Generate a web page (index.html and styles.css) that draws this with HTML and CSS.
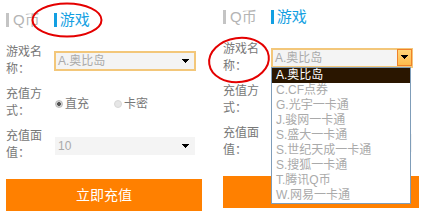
FILE: index.html
```html
<!DOCTYPE html>
<html>
<head>
<meta charset="utf-8">
<link rel="stylesheet" href="styles.css">
</head>
<body>
<div class="wrap">
  <div class="panel p1">
    <div class="tabs">
      <span class="tab off"><i class="bar"></i>Q币</span>
      <span class="tab on"><i class="bar"></i>游戏</span>
    </div>
    <div class="row">
      <div class="label">游戏名称：</div>
      <div class="select hl"><span class="val">A.奥比岛</span><svg class="arr" width="8" height="5" viewBox="0 0 8 5"><path d="M0 0h7v1h-1v1h-1v1h-1v1h-1v-1h-1v-1h-1v-1h-1z" fill="#000"/></svg></div>
    </div>
    <div class="row">
      <div class="label">充值方式：</div>
      <div class="radios">
        <span class="radio"><i class="dot on"></i>直充</span>
        <span class="radio"><i class="dot"></i>卡密</span>
      </div>
    </div>
    <div class="row">
      <div class="label">充值面值：</div>
      <div class="select plain"><span class="val">10</span><svg class="arr" width="8" height="5" viewBox="0 0 8 5"><path d="M0 0h7v1h-1v1h-1v1h-1v1h-1v-1h-1v-1h-1v-1h-1z" fill="#000"/></svg></div>
    </div>
    <button class="btn">立即充值</button>
  </div>

  <div class="panel p2">
    <div class="tabs">
      <span class="tab off"><i class="bar"></i>Q币</span>
      <span class="tab on"><i class="bar"></i>游戏</span>
    </div>
    <div class="row">
      <div class="label">游戏名称：</div>
      <div class="select hl open"><span class="val">A.奥比岛</span><span class="abtn"><svg width="8" height="5" viewBox="0 0 8 5"><path d="M0 0h7v1h-1v1h-1v1h-1v1h-1v-1h-1v-1h-1v-1h-1z" fill="#000"/></svg></span>
        <ul class="list">
          <li class="sel">A.奥比岛</li>
          <li>C.CF点券</li>
          <li>G.光宇一卡通</li>
          <li>J.骏网一卡通</li>
          <li>S.盛大一卡通</li>
          <li>S.世纪天成一卡通</li>
          <li>S.搜狐一卡通</li>
          <li>T.腾讯Q币</li>
          <li>W.网易一卡通</li>
        </ul>
      </div>
    </div>
    <div class="row">
      <div class="label">充值方式：</div>
      <div class="radios">
        <span class="radio"><i class="dot on"></i>直充</span>
        <span class="radio"><i class="dot"></i>卡密</span>
      </div>
    </div>
    <div class="row">
      <div class="label">充值面值：</div>
      <div class="select plain"><span class="val">10</span></div>
    </div>
    <button class="btn">立即充值</button>
  </div>
</div>
<svg class="marks" width="426" height="219" viewBox="0 0 426 219">
  <ellipse cx="67" cy="20" rx="34.5" ry="16.5" fill="none" stroke="#e40000" stroke-width="2"/>
  <ellipse cx="239" cy="60" rx="30" ry="22" fill="none" stroke="#e40000" stroke-width="2" transform="rotate(-8 239 60)"/>
  <rect x="273.5" y="171.5" width="82" height="16" fill="none" stroke="#e01010" stroke-width="2"/>
</svg>
</body>
</html>
```

FILE: styles.css
```css
* { box-sizing: border-box; }
html, body { margin: 0; padding: 0; background: #fff; }
body {
  width: 426px;
  height: 219px;
  overflow: hidden;
  position: relative;
  font-family: "Liberation Sans", "Noto Sans CJK SC", sans-serif;
  font-size: 12px;
  color: #777;
}
.wrap {
  display: flex;
  align-items: flex-start;
  padding-left: 6px;
  gap: 21px;
}
.panel { width: 196px; display: flex; flex-direction: column; }
.p1 { padding-top: 10px; }
.p2 { padding-top: 7px; }

.tabs {
  display: flex;
  align-items: center;
  height: 20px;
  margin-bottom: 14px;
  font-size: 15px;
  line-height: 20px;
}
.tab { display: flex; align-items: center; }
.tab .bar { display: block; width: 3px; height: 14px; margin-right: 4px; }
.tab.off { color: #b4b4b4; margin-right: 14px; }
.tab.off .bar { background: #c4c4c4; }
.tab.on { color: #139fe2; }
.tab.on .bar { background: #139fe2; margin-right: 3px; }

.row {
  display: flex;
  align-items: center;
  margin-bottom: 8px;
}
.label {
  width: 40px;
  margin-right: 8px;
  line-height: 17px;
  color: #777;
  font-size: 12px;
}
.select {
  position: relative;
  width: 142px;
  display: flex;
  align-items: center;
  background: #f4f4f4;
  color: #aaa;
}
.select .val { flex: 1; padding-left: 3px; line-height: 16px; }
.select.hl { height: 20px; border: 2px solid #f3c77a; }
.select.hl .val { padding-left: 2px; }
.select.plain { height: 18px; width: 140px; margin-left: 1px; margin-top: 2px; }
.select .arr { margin-right: 5px; }
.select.hl .arr { margin-right: 4px; }

.abtn {
  width: 15px;
  height: 17px;
  margin-right: -1px;
  margin-top: -1px;
  background: linear-gradient(#ffd57a, #ffbc4c);
  border: 1px solid #f0822a;
  display: flex;
  align-items: center;
  justify-content: center;
}

.list {
  position: absolute;
  left: -2px;
  top: 17px;
  width: 140px;
  margin: 0;
  padding: 0;
  list-style: none;
  background: #fff;
  border: 1px solid #7f9db9;
  z-index: 2;
}
.list li {
  height: 15px;
  line-height: 15px;
  padding-left: 4px;
  color: #aaa;
  white-space: nowrap;
}
.list li.sel { background: #2a1600; color: #fff; }

.radios { display: flex; align-items: center; margin-left: 1px; margin-top: 1px; }
.radio { display: flex; align-items: center; color: #777; line-height: 16px; }
.radio + .radio { margin-left: 25px; }
.dot {
  display: block;
  width: 8px;
  height: 8px;
  border-radius: 50%;
  margin-right: 2px;
  background: #e6e6e6;
  border: 1px solid #d8d8d8;
}
.dot.on {
  background: radial-gradient(circle, #555 0 1.6px, #d0d0d0 2.2px);
  border-color: #bbb;
}

.btn {
  margin-top: 9px;
  width: 196px;
  height: 32px;
  border: 0;
  padding: 0;
  background: #ff8000;
  color: #fff;
  font-family: "Liberation Sans", "Noto Sans CJK SC", sans-serif;
  font-size: 14px;
  line-height: 32px;
}

.marks { position: absolute; left: 0; top: 0; pointer-events: none; }
```
